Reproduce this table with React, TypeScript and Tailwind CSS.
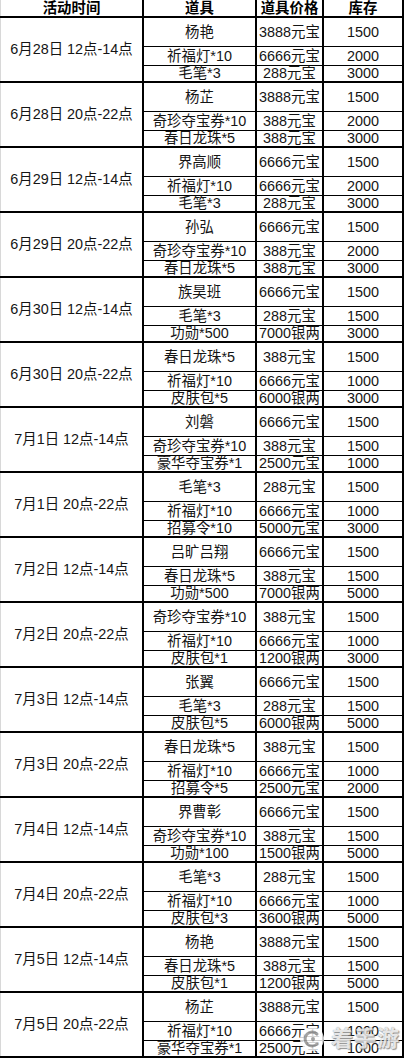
type Item = [string, string, string];
type Slot = { time: string; items: Item[] };

const slots: Slot[] = [
  { time: "6月28日 12点-14点", items: [["杨艳", "3888元宝", "1500"], ["祈福灯*10", "6666元宝", "2000"], ["毛笔*3", "288元宝", "3000"]] },
  { time: "6月28日 20点-22点", items: [["杨芷", "3888元宝", "1500"], ["奇珍夺宝券*10", "388元宝", "2000"], ["春日龙珠*5", "388元宝", "3000"]] },
  { time: "6月29日 12点-14点", items: [["界高顺", "6666元宝", "1500"], ["祈福灯*10", "6666元宝", "2000"], ["毛笔*3", "288元宝", "3000"]] },
  { time: "6月29日 20点-22点", items: [["孙弘", "6666元宝", "1500"], ["奇珍夺宝券*10", "388元宝", "2000"], ["春日龙珠*5", "388元宝", "3000"]] },
  { time: "6月30日 12点-14点", items: [["族昊班", "6666元宝", "1500"], ["毛笔*3", "288元宝", "1500"], ["功勋*500", "7000银两", "3000"]] },
  { time: "6月30日 20点-22点", items: [["春日龙珠*5", "388元宝", "1500"], ["祈福灯*10", "6666元宝", "1000"], ["皮肤包*5", "6000银两", "3000"]] },
  { time: "7月1日 12点-14点", items: [["刘磐", "6666元宝", "1500"], ["奇珍夺宝券*10", "388元宝", "1500"], ["豪华夺宝券*1", "2500元宝", "1000"]] },
  { time: "7月1日 20点-22点", items: [["毛笔*3", "288元宝", "1500"], ["祈福灯*10", "6666元宝", "1000"], ["招募令*10", "5000元宝", "3000"]] },
  { time: "7月2日 12点-14点", items: [["吕旷吕翔", "6666元宝", "1500"], ["春日龙珠*5", "388元宝", "1500"], ["功勋*500", "7000银两", "5000"]] },
  { time: "7月2日 20点-22点", items: [["奇珍夺宝券*10", "388元宝", "1500"], ["祈福灯*10", "6666元宝", "1000"], ["皮肤包*1", "1200银两", "3000"]] },
  { time: "7月3日 12点-14点", items: [["张翼", "6666元宝", "1500"], ["毛笔*3", "288元宝", "1500"], ["皮肤包*5", "6000银两", "5000"]] },
  { time: "7月3日 20点-22点", items: [["春日龙珠*5", "388元宝", "1500"], ["祈福灯*10", "6666元宝", "1000"], ["招募令*5", "2500元宝", "2000"]] },
  { time: "7月4日 12点-14点", items: [["界曹彰", "6666元宝", "1500"], ["奇珍夺宝券*10", "388元宝", "1500"], ["功勋*100", "1500银两", "5000"]] },
  { time: "7月4日 20点-22点", items: [["毛笔*3", "288元宝", "1500"], ["祈福灯*10", "6666元宝", "1000"], ["皮肤包*3", "3600银两", "5000"]] },
  { time: "7月5日 12点-14点", items: [["杨艳", "3888元宝", "1500"], ["春日龙珠*5", "388元宝", "1500"], ["皮肤包*1", "1200银两", "5000"]] },
  { time: "7月5日 20点-22点", items: [["杨芷", "3888元宝", "1500"], ["祈福灯*10", "6666元宝", "1000"], ["豪华夺宝券*1", "2500元宝", "1000"]] },
];

// row heights inside a 65px block (last one sits on the 2px block border)
const rowH = ["h-[29px] border-b border-black", "h-[19px] border-b border-black", "h-[15px]"];

function Row({ item, idx }: { item: Item; idx: number }) {
  return (
    <div className={`grid grid-cols-[113px_67px_80px] ${rowH[idx]}`}>
      <div className="flex items-center justify-center border-r-2 border-black whitespace-nowrap">{item[0]}</div>
      <div className="flex items-center justify-center border-r-2 border-black whitespace-nowrap">{item[1]}</div>
      <div className="flex items-center justify-center border-r-2 border-black">{item[2]}</div>
    </div>
  );
}

function Watermark() {
  return (
    <div className="pointer-events-none absolute bottom-[6px] right-[4px] flex items-center gap-[6px] opacity-90">
      <svg width="26" height="26" viewBox="0 0 26 26">
        <circle cx="13" cy="13" r="12" fill="#ffffff" fillOpacity="0.9" />
        <path d="M18 8 A7 7 0 1 0 18 18" stroke="#9a9a9a" strokeWidth="3" fill="none" strokeLinecap="round" />
        <circle cx="14" cy="13" r="2" fill="#9a9a9a" />
      </svg>
      <span className="text-[22px] font-bold leading-none tracking-[1px] text-white/80 [text-shadow:0_0_1px_#777,1px_1px_1px_#888]">
        着手游
      </span>
    </div>
  );
}

export default function App() {
  return (
    <div className="relative w-[404px] bg-white text-[14.4px] leading-none text-[#141414] [font-family:'Liberation_Sans','Noto_Sans_CJK_SC',sans-serif]">
      <div className="grid h-[18px] grid-cols-[144px_113px_67px_80px] border-b-2 border-black font-bold text-black">
        <div className="flex items-center justify-center border-l border-r-2 border-l-[#d8d8d8] border-r-black">活动时间</div>
        <div className="flex items-center justify-center border-r-2 border-black">道具</div>
        <div className="flex items-center justify-center border-r-2 border-black">道具价格</div>
        <div className="flex items-center justify-center border-r-2 border-black">库存</div>
      </div>
      {slots.map((s) => (
        <div key={s.time} className="flex h-[65px] border-b-2 border-black">
          <div className="flex w-[144px] shrink-0 items-center justify-center whitespace-nowrap border-l border-r-2 border-l-[#d8d8d8] border-r-black">
            {s.time}
          </div>
          <div className="flex flex-col">
            {s.items.map((it, i) => (
              <Row key={i} item={it} idx={i} />
            ))}
          </div>
        </div>
      ))}
      <Watermark />
    </div>
  );
}
